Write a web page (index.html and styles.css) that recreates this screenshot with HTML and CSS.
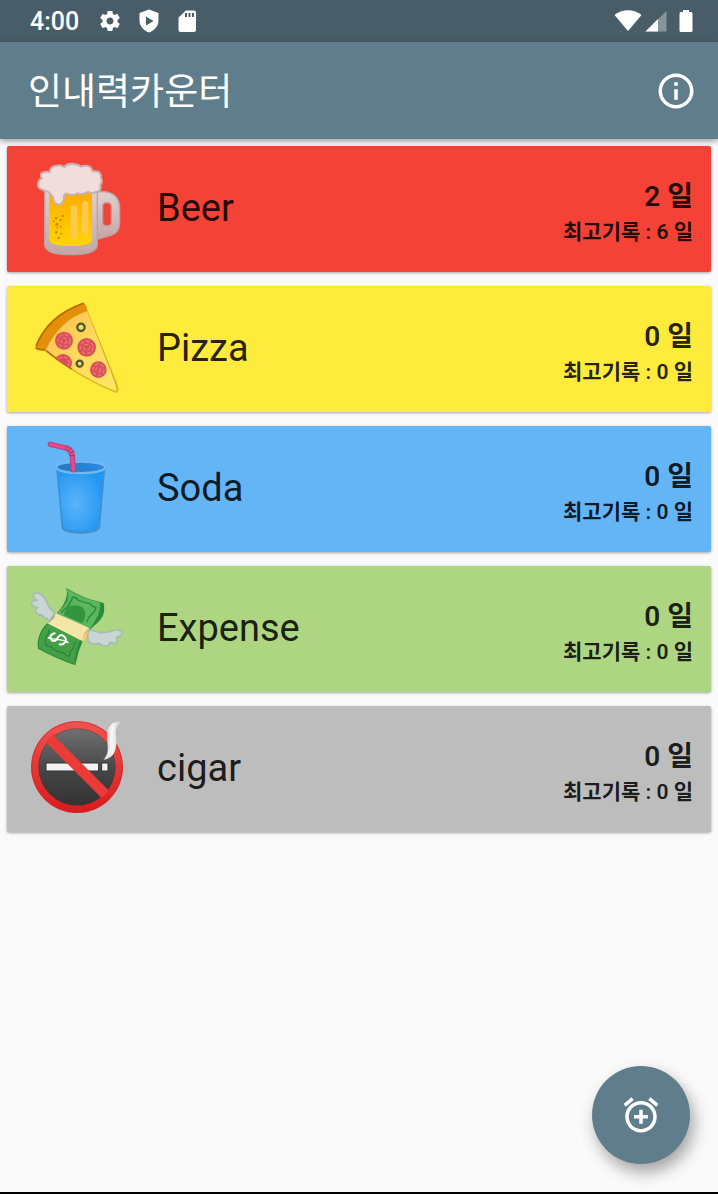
FILE: index.html
```
<!DOCTYPE html>
<html lang="ko">
<head>
	<meta charset="utf-8">
	<meta name="viewport" content="width=device-width, initial-scale=1">
	<title>인내력카운터</title>
	<link rel="stylesheet" href="styles.css">
</head>
<body>
	<div class="statusbar">
		<span class="clock">4:00</span>
		<div class="notices">
			<svg class="glyph" viewBox="0 0 24 24"><path d="M19.43 12.98c.04-.32.07-.64.07-.98s-.03-.66-.07-.98l2.11-1.65c.19-.15.24-.42.12-.64l-2-3.46c-.12-.22-.39-.3-.61-.22l-2.49 1c-.52-.4-1.08-.73-1.69-.98l-.38-2.65C14.46 2.18 14.25 2 14 2h-4c-.25 0-.46.18-.49.42l-.38 2.65c-.61.25-1.17.59-1.69.98l-2.49-1c-.23-.09-.49 0-.61.22l-2 3.46c-.13.22-.07.49.12.64l2.11 1.65c-.04.32-.07.65-.07.98s.03.66.07.98l-2.11 1.65c-.19.15-.24.42-.12.64l2 3.46c.12.22.39.3.61.22l2.49-1c.52.4 1.08.73 1.69.98l.38 2.65c.03.24.24.42.49.42h4c.25 0 .46-.18.49-.42l.38-2.65c.61-.25 1.17-.59 1.69-.98l2.49 1c.23.09.49 0 .61-.22l2-3.46c.12-.22.07-.49-.12-.64l-2.11-1.65zM12 15.5c-1.930 0-3.500-1.570-3.500-3.500s1.570-3.500 3.500-3.500 3.500 1.570 3.500 3.500-1.570 3.500-3.500 3.500z"/></svg>
			<svg class="glyph" viewBox="0 0 24 24"><path fill-rule="evenodd" d="M12 0.500L2.500 4v7.500c0 5.500 4 10 9.500 12 5.500-2 9.500-6.500 9.500-12V4zM9 7.500v9l7.500-4.500z"/></svg>
			<svg class="glyph" viewBox="0 0 24 24"><path fill-rule="evenodd" d="M18 1.500h-8L2.500 8.500v12.500c0 1.100.9 2 2 2H18c1.100 0 2-.9 2-2v-17.500c0-1.100-.9-2-2-2zM9 4h2v4h-2zM12.500 4h2v4h-2zM16 4h2v4h-2z"/></svg>
		</div>
		<div class="signals">
			<svg width="28" height="24" viewBox="0 0 28 24"><path d="M14 22L.5 6C7.500-.3 20.500-.3 27.500 6z"/></svg>
			<svg width="22" height="24" viewBox="0 0 22 24"><path opacity=".35" d="M21.500 2v20.500H.5z"/><path d="M13 10v12.500H.5z"/></svg>
			<svg width="14" height="24" viewBox="0 0 14 24"><path d="M4 1h6v2h2q1.500 0 1.500 1.500v17q0 1.500-1.500 1.500H2Q.5 23 .5 21.500v-17Q.5 3 2 3h2z"/></svg>
		</div>
	</div>

	<header class="appbar">
		<h1>인내력카운터</h1>
		<button type="button" class="info" aria-label="정보">
			<svg viewBox="0 0 24 24"><path d="M11 17h2v-6h-2v6zm1-15C6.480 2 2 6.480 2 12s4.480 10 10 10 10-4.480 10-10S17.520 2 12 2zm0 18c-4.410 0-8-3.590-8-8s3.590-8 8-8 8 3.590 8 8-3.590 8-8 8zM11 9h2V7h-2v2z"/></svg>
		</button>
	</header>

	<main>
		<ul class="counters">
			<li class="card red">
				<svg class="emoji" viewBox="0 0 360 360">
					<defs>
						<linearGradient id="ale" x1="0" y1="0" x2="0" y2="1"><stop offset="0" stop-color="#ffa800"/><stop offset="1" stop-color="#ffd600"/></linearGradient>
						<linearGradient id="glass" x1="0" y1="0" x2="0" y2="1"><stop offset="0" stop-color="#e0d0d0"/><stop offset="1" stop-color="#c3a6a4"/></linearGradient>
					</defs>
					<path d="M232 126q18-4 36 2 32 10 31 50v40q0 28-24 37l-43 13zm16 42v48q0 12 13 12t13-12v-46q0-12-13-12t-13 10z" fill="url(#glass)" fill-rule="evenodd" stroke="#bda09f" stroke-width="4"/>
					<path d="M74 112h158v172q0 30-79 30t-79-30z" fill="url(#glass)" stroke="#bda09f" stroke-width="4"/>
					<path d="M88 116h128v156q-6 16-63 16t-65-16z" fill="url(#ale)"/>
					<rect x="152" y="165" width="20" height="102" rx="10" fill="#ffc94a"/>
					<rect x="186" y="152" width="19" height="103" rx="9" fill="#ffc94a"/>
					<g fill="#d98a10"><circle cx="108" cy="205" r="4"/><circle cx="128" cy="198" r="4"/><circle cx="101" cy="214" r="3"/><circle cx="122" cy="210" r="4"/><circle cx="111" cy="223" r="5"/><circle cx="122" cy="231" r="3"/><circle cx="109" cy="247" r="4"/><circle cx="123" cy="251" r="3"/><circle cx="116" cy="264" r="4"/><circle cx="112" cy="233" r="3"/></g>
					<path d="M70 120Q50 116 54 98 57 88 65 85 56 68 75 66 87 64 90 69 87 49 110 47 121 44 132 51 145 38 165 43 177 44 182 50 211 40 218 64 244 61 243 83 249 96 241 104 246 125 225 127 213 132 204 125 190 136 172 130 158 140 140 131 130 130 132 145 128 164 115 164 102 162 97 138 91 130 82 124 76 125 70 120z" fill="#f1dddc" stroke="#c8b1b0" stroke-width="6"/>
				</svg>
				<h2>Beer</h2>
				<div class="record">
					<strong>2 일</strong>
					<span>최고기록 : 6 일</span>
				</div>
			</li>
			<li class="card yellow">
				<svg class="emoji" viewBox="0 0 360 360">
					<defs>
						<linearGradient id="cheese" x1="0" y1="0" x2="1" y2="1"><stop offset="0" stop-color="#ffb74d"/><stop offset=".5" stop-color="#ffd95c"/><stop offset="1" stop-color="#ffe763"/></linearGradient>
						<clipPath id="slice"><path d="M68 182Q116 96 198 62L293 307Q228 284 155 238z"/></clipPath>
					</defs>
					<path d="M45 174Q82 72 192 38L202 60 291 280Q301 305 288 309 226 284 155 240 108 207 68 180z" fill="#b8860b" opacity=".55"/>
					<path d="M68 180Q116 92 200 60L283 274Q292 298 288 304 224 280 155 235z" fill="url(#cheese)"/>
					<path d="M46 174Q77 74 190 38 198 39 202 63 121 88 77 180 58 183 46 174z" fill="#e19008"/>
					<path d="M48 168Q83 80 190 40" fill="none" stroke="#b96808" stroke-width="5"/>
					<path d="M47 174q12 8 30 5M79 182q42 35 76 55" fill="none" stroke="#b77008" stroke-width="5"/>
					<g clip-path="url(#slice)">
						<g fill="#dc5058"><circle cx="132" cy="152" r="27"/><circle cx="200" cy="172" r="28"/><circle cx="235" cy="239" r="25"/><circle cx="129" cy="219" r="27"/></g>
						<g fill="none" stroke="#e8787d" stroke-width="4" stroke-dasharray="11 6"><circle cx="132" cy="152" r="18"/><circle cx="200" cy="172" r="19"/><circle cx="235" cy="239" r="17"/><circle cx="129" cy="219" r="18"/><circle cx="132" cy="152" r="8"/><circle cx="200" cy="172" r="9"/><circle cx="235" cy="239" r="7"/></g>
					</g>
					<g fill="#f0dc66" stroke="#4e572f" stroke-width="7"><circle cx="183" cy="112" r="11"/><circle cx="179" cy="221" r="9"/></g>
				</svg>
				<h2>Pizza</h2>
				<div class="record">
					<strong>0 일</strong>
					<span>최고기록 : 0 일</span>
				</div>
			</li>
			<li class="card blue">
				<svg class="emoji" viewBox="0 0 360 360">
					<defs>
						<radialGradient id="cup" cx=".4" cy=".55" r=".65"><stop offset="0" stop-color="#5bb4fa"/><stop offset="1" stop-color="#2196f3"/></radialGradient>
						<linearGradient id="mouth"><stop offset="0" stop-color="#2478c4"/><stop offset="1" stop-color="#2a8ae2"/></linearGradient>
					</defs>
					<path d="M108 112L125 294Q132 311 182 311T240 294L256 112z" fill="#3f91d2"/>
					<path d="M114 122L131 290Q140 302 182 302T234 290L250 122z" fill="url(#cup)"/>
					<ellipse cx="182" cy="112" rx="73" ry="17" fill="url(#mouth)" stroke="#74b9ed" stroke-width="6"/>
					<path d="M91 43L139 54Q156 59 157 78L160 123" fill="none" stroke="#b44280" stroke-width="16" stroke-linecap="round"/>
					<path d="M91 43L139 54Q156 59 157 78L160 120" fill="none" stroke="#e84c88" stroke-width="10" stroke-linecap="round"/>
					<path d="M134 60l11-13M140 66l16-13M145 71l18-7M147 77h18" stroke="#a82e68" stroke-width="3"/>
					<path d="M110 116q15 14 72 14t72-14" fill="none" stroke="#74b9ed" stroke-width="5"/>
				</svg>
				<h2>Soda</h2>
				<div class="record">
					<strong>0 일</strong>
					<span>최고기록 : 0 일</span>
				</div>
			</li>
			<li class="card green">
				<svg class="emoji" viewBox="0 0 360 360">
					<path d="M139 54Q190 86 251 99C257 132 247 144 231 160Q204 182 190 208 174 244 166 286 103 263 54 236C50 212 60 180 79 163Q112 132 130 104 145 76 139 54z" fill="#2b8b3c"/>
					<path d="M140 57Q190 87 240 98C244 130 234 142 218 159Q192 181 181 207 165 241 164 282 104 260 57 233C54 210 64 182 82 165Q112 132 134 104 147 78 140 57z" fill="#43a047"/>
					<path d="M140 57Q190 87 240 98 242 130 210 177L110 132Q144 98 146 84 146 70 140 57z" fill="#5bb75d"/>
					<path d="M156 82q12-2 18 8 18 9 36 10 4 11 18 12-2 12-12 20-10 8-16 24M124 130q4-10 14-16 10-5 11-16 8-6 7-16M87 178q1 12-7 20-6 7-4 14-2 10 5 16 14 0 20 10 14 8 30 11 6 8 16 9 5-6 4-14 12-6 10-16 2-8 8-14" fill="none" stroke="#2c873a" stroke-width="4"/>
					<path d="M132 136q2-30 34-30 30 2 30 26 0 12-8 28z" fill="#35943f"/>
					<path d="M108 130L208 174Q190 186 188 214L82 160Q103 148 108 130z" fill="#f5e6a8"/>
					<path d="M208 174l1 17-15 21-8 1q5-23 22-39z" fill="#ffc774"/>
					<path d="M104 190Q88 194 92 206 98 218 109 210 113 204 116 199 124 191 133 200 142 210 134 218 129 225 119 223M86 203L93 206M136 214L143 217" fill="none" stroke="#fff" stroke-width="6" stroke-linecap="round"/>
					<path d="M96 206L134 212" fill="none" stroke="#fff" stroke-width="4"/>
					<path d="M104 130Q86 114 79 93 72 78 57 70 41 67 40 76 39 85 51 91 33 90 35 101 36 110 53 113 42 119 48 127 52 134 67 136 71 145 81 145 84 153 89 155 93 145 104 130z" fill="#c9d6d3" stroke="#a4bcb4" stroke-width="5" stroke-linejoin="round"/>
					<path d="M206 182Q223 180 237 187 259 190 278 182 303 176 306 189 304 199 289 203 297 211 288 218 280 222 269 217 268 228 254 228 243 227 237 219 222 226 212 219 197 212 206 182z" fill="#c9d6d3" stroke="#a4bcb4" stroke-width="5" stroke-linejoin="round"/>
				</svg>
				<h2>Expense</h2>
				<div class="record">
					<strong>0 일</strong>
					<span>최고기록 : 0 일</span>
				</div>
			</li>
			<li class="card gray">
				<svg class="emoji" viewBox="0 0 360 360">
					<defs>
						<linearGradient id="plate" x1="0" y1="0" x2="0" y2="1"><stop offset="0" stop-color="#707070"/><stop offset=".6" stop-color="#424242"/><stop offset="1" stop-color="#333"/></linearGradient>
						<linearGradient id="ring" x1="0" y1="0" x2="0" y2="1"><stop offset="0" stop-color="#f05350"/><stop offset="1" stop-color="#d91b1b"/></linearGradient>
						<linearGradient id="smoke"><stop offset="0" stop-color="#ccc"/><stop offset=".5" stop-color="#f5f5f5"/><stop offset="1" stop-color="#bbb"/></linearGradient>
					</defs>
					<circle cx="171" cy="171" r="138" fill="url(#ring)"/>
					<circle cx="171" cy="171" r="136" fill="none" stroke="#c62828" stroke-width="3" opacity=".6"/>
					<circle cx="171" cy="171" r="115" fill="url(#plate)" stroke="#333" stroke-opacity=".4" stroke-width="3"/>
					<path d="M78 159h158v24H78zM245 159h19v24h-19z" fill="#f2f2f2" stroke="#303030" stroke-width="3"/>
					<path d="M77 96l22-22 168 168-22 22z" fill="#ea3b39"/>
					<path d="M250 150Q266 133 263 107 260 76 263 61 270 33 308 34 286 45 287 71 293 103 284 125 275 146 250 150z" fill="url(#smoke)"/>
					<path d="M256 144q21-22 16-53-1-28 11-42" fill="none" stroke="#fff" stroke-width="4" opacity=".6"/>
				</svg>
				<h2>cigar</h2>
				<div class="record">
					<strong>0 일</strong>
					<span>최고기록 : 0 일</span>
				</div>
			</li>
		</ul>
	</main>

	<button type="button" class="fab" aria-label="추가">
		<svg viewBox="0 0 24 24"><path d="M7.880 3.390L6.600 1.860 2 5.710l1.290 1.530 4.590-3.850zM22 5.720l-4.600-3.860-1.290 1.530 4.600 3.860L22 5.720zM12 4c-4.970 0-9 4.030-9 9s4.020 9 9 9c4.970 0 9-4.030 9-9s-4.030-9-9-9zm0 16c-3.870 0-7-3.130-7-7s3.130-7 7-7 7 3.130 7 7-3.130 7-7 7zm1-11h-2v3H8v2h3v3h2v-3h3v-2h-3V9z"/></svg>
	</button>
</body>
</html>
```
FILE: styles.css
```
*					{ box-sizing: border-box; }
body				{ margin: 0; min-height: 100vh; background: #fafafa;
					  border-bottom: 2px solid #000000;
					  font-family: Roboto, "Noto Sans CJK KR", sans-serif; }
h1, h2, ul			{ margin: 0; padding: 0; font-weight: 400; }
button				{ border: 0; padding: 0; cursor: pointer; }
svg					{ display: block; flex: none; }

.statusbar			{ display: flex; align-items: center; height: 42px;
					  padding: 0 25px 0 30px; background: #485d67;
					  color: #ffffff; fill: #ffffff; }
.clock				{ padding-top: 2px; font-size: 25px; font-weight: 500; line-height: 44px; }
.notices			{ display: flex; gap: 15px; margin-left: 19px; }
.glyph				{ width: 24px; height: 24px; }
.signals			{ display: flex; align-items: center; margin-left: auto; }
.signals svg + svg	{ margin-left: 3px; }
.signals svg:last-child	{ margin-left: 12px; }

.appbar				{ position: relative; display: flex; align-items: center;
					  justify-content: space-between; height: 97px;
					  padding: 0 21px 0 28px; background: #607d8b; color: #ffffff;
					  box-shadow: 0 2px 6px rgba(0, 0, 0, 0.4); }
.appbar h1			{ padding-top: 4px; font-size: 37px; line-height: 48px; }
.info				{ width: 42px; height: 42px; background: none; }
.info svg,
.fab svg			{ width: 42px; height: 42px; fill: #ffffff; }

.counters			{ display: flex; flex-direction: column; gap: 14px;
					  padding: 7px; list-style: none; }
.card				{ display: flex; align-items: center; padding: 4px 18px 2px 13px;
					  border-radius: 2px; color: rgba(0, 0, 0, 0.87);
					  box-shadow: 0 1px 3px rgba(0, 0, 0, 0.35); }
.emoji				{ width: 120px; height: 120px; }
.card h2			{ flex: 1; margin-left: 17px; padding-bottom: 4px;
					  font-size: 38px; line-height: 48px; }
.record				{ display: flex; flex-direction: column; align-items: flex-end;
					  padding-top: 6px; font-weight: 600; }
.record strong		{ font-size: 28px; line-height: 38px; font-weight: 600; }
.record span		{ font-size: 21px; line-height: 32px; }

.red				{ background: #f44336; }
.yellow				{ background: #ffeb3b; }
.blue				{ background: #64b5f6; }
.green				{ background: #aed581; }
.gray				{ background: #bdbdbd; }

.fab				{ position: fixed; right: 28px; bottom: 30px;
					  display: flex; align-items: center; justify-content: center;
					  width: 98px; height: 98px; border-radius: 50%; background: #607d8b;
					  box-shadow: 4px 8px 16px rgba(0, 0, 0, 0.35); }
```
